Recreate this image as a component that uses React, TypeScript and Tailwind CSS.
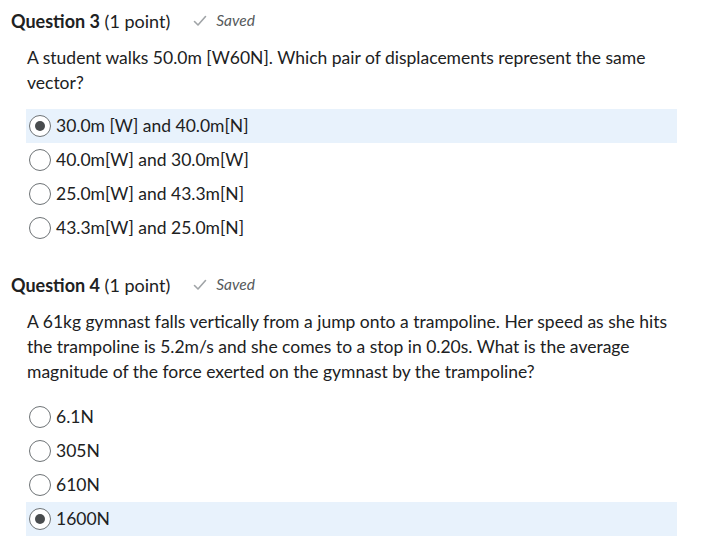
const font = { fontFamily: "Lato, 'Noto Sans', sans-serif" };

type Q = {
  num: number;
  text: string;
  options: string[];
  selected: number;
};

const QUESTIONS: Q[] = [
  {
    num: 3,
    text: "A student walks 50.0m [W60N]. Which pair of displacements represent the same vector?",
    options: [
      "30.0m [W] and 40.0m[N]",
      "40.0m[W] and 30.0m[W]",
      "25.0m[W] and 43.3m[N]",
      "43.3m[W] and 25.0m[N]",
    ],
    selected: 0,
  },
  {
    num: 4,
    text: "A 61kg gymnast falls vertically from a jump onto a trampoline. Her speed as she hits the trampoline is 5.2m/s and she comes to a stop in 0.20s. What is the average magnitude of the force exerted on the gymnast by the trampoline?",
    options: ["6.1N", "305N", "610N", "1600N"],
    selected: 3,
  },
];

function Radio({ checked }: { checked: boolean }) {
  return (
    <span className="flex h-[22px] w-[22px] shrink-0 items-center justify-center rounded-full border border-[#6e7376] bg-white">
      {checked && <span className="h-[10px] w-[10px] rounded-full bg-[#494c4e]" />}
    </span>
  );
}

function Check() {
  return (
    <svg width="14" height="12" viewBox="0 0 14 12" fill="none">
      <path d="M1.5 6.5 L5 10 L12.5 1.5" stroke="#a0a4a7" strokeWidth="1.6" strokeLinecap="round" strokeLinejoin="round" />
    </svg>
  );
}

function Question({ q }: { q: Q }) {
  return (
    <div>
      <div className="flex h-[24px] items-center pl-[11px]">
        <h2 className="text-[18px] text-[#202122]">
          <span className="font-bold">Question {q.num}</span> (1 point)
        </h2>
        <span className="ml-[23px] flex items-center gap-[9px] text-[15.5px] italic text-[#565a5c]">
          <Check />
          Saved
        </span>
      </div>
      <p className="mt-[12px] pl-[27px] pr-[40px] text-[17.5px] leading-[25px] text-[#202122]">
        {q.text}
      </p>
      <ul className={q.num === 3 ? "ml-[26px] mt-[14px] w-[651px]" : "ml-[26px] mt-[16px] w-[651px]"}>
        {q.options.map((o, i) => (
          <li
            key={i}
            className={`flex h-[34px] items-center gap-[5px] pl-[3px] text-[17.5px] text-[#202122] ${i === q.selected ? "bg-[#e8f2fc]" : ""}`}
          >
            <Radio checked={i === q.selected} />
            {o}
          </li>
        ))}
      </ul>
    </div>
  );
}

export default function App() {
  return (
    <div className="h-[543px] w-[720px] overflow-hidden bg-white pt-[9px]" style={font}>
      <Question q={QUESTIONS[0]} />
      <div className="h-[28px]" />
      <Question q={QUESTIONS[1]} />
    </div>
  );
}
